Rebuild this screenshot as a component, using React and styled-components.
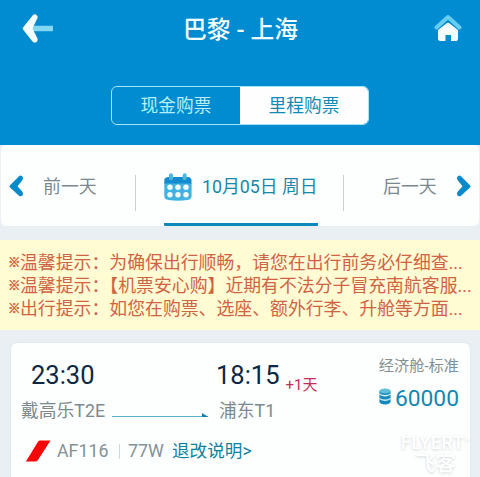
import React from 'react';
import styled, { createGlobalStyle } from 'styled-components';

const Global = createGlobalStyle`
  * { box-sizing: border-box; }
  body {
    margin: 0;
    background: #e9eff2;
    font-family: Roboto, "Noto Sans CJK SC", sans-serif;
    overflow: hidden;
  }
`;

const Screen = styled.main`
  width: 480px;
  height: 477px;
  overflow: hidden;
  background: #e9eff2;
`;

const Header = styled.header`
  height: 145px;
  background: #018bd0;
`;

const TitleBar = styled.div`
  display: grid;
  grid-template-columns: 60px 1fr 60px;
  height: 86px;
  svg { display: block; }
`;

const IconButton = styled.div`
  padding: ${p => p.$pad};
`;

const Title = styled.h1`
  margin: 0;
  padding: 12px 0 0 1px;
  text-align: center;
  white-space: nowrap;
  font-size: 23.8px;
  font-weight: 500;
  line-height: 36px;
  color: #f1fdff;
`;

const Segmented = styled.div`
  display: grid;
  grid-template-columns: 128px 1fr;
  width: 258px;
  height: 39px;
  margin-left: 111px;
  border: 1px solid #a5e6f7;
  border-radius: 6px;
  overflow: hidden;
`;

const Segment = styled.div`
  text-align: center;
  font-size: 17.7px;
  line-height: 38px;
  color: ${p => (p.$active ? '#128bb4' : '#b5effa')};
  background: ${p => (p.$active ? '#fefefe' : 'transparent')};
`;

const DateBar = styled.nav`
  display: grid;
  grid-template-columns: 42px 92px 29px 154px 25px 40px 73px 1fr;
  height: 81px;
  margin: 0 1px;
  background: #fdfefe;
  border-radius: 5px;
  svg { display: block; }
`;

const Day = styled.div`
  font-size: 17.9px;
  line-height: 24px;
  padding-top: 30px;
  color: #7b898e;
  white-space: nowrap;
`;

const Divider = styled.div`
  width: 1px;
  height: 36px;
  margin-top: 30px;
  background: #c5d3d9;
`;

const SelectedDay = styled.div`
  display: flex;
  gap: 10px;
  border-bottom: 3px solid #0c88b9;
  border-radius: 1px;
  white-space: nowrap;
  font-size: 17.8px;
  line-height: 24px;
  color: #1688a7;
  svg { flex: none; margin-top: 28px; }
  span { padding-top: 30px; }
`;

const Chevron = styled.div`
  padding: 29px 0 0 ${p => p.$left}px;
`;

const Notices = styled.section`
  height: 90px;
  margin-top: 14px;
  padding: 11px 0 0 9px;
  background: #fffbd3;
  color: #cf6444;
`;

const Notice = styled.p`
  display: flex;
  margin: 0;
  height: 23px;
  line-height: 23px;
  font-size: 17.88px;
  white-space: nowrap;
`;

const Mark = styled.span`
  width: 11px;
  font-size: 12.5px;
  -webkit-text-stroke: 0.5px #cf6444;
  text-indent: -1px;
`;

const Card = styled.article`
  height: 150px;
  margin: 13px 10px 0 11px;
  padding-top: 1px;
  background: #fdfefe;
  border-radius: 6px;
  box-shadow: 0 0 2px #d5e0e4;
`;

const Journey = styled.div`
  display: grid;
  grid-template-columns: 101px 97px 150px 1fr;
  height: 90px;
`;

const Stop = styled.div`
  padding: 13px 0 0 ${p => p.$left}px;
  white-space: nowrap;
`;

const Time = styled.div`
  display: flex;
  height: 36px;
  font-size: 25.5px;
  line-height: 36px;
  margin-left: ${p => p.$shift}px;
  color: #0c2744;
`;

const NextDay = styled.span`
  padding: 10px 0 0 6px;
  font-size: 15px;
  line-height: 36px;
  color: #c22c5d;
`;

const Airport = styled.div`
  font-size: 17.8px;
  line-height: 24px;
  margin-top: 6px;
  color: #7c898e;
`;

const Route = styled.div`
  padding-top: 67px;
  svg { display: block; }
`;

const Fare = styled.div`
  padding: 10px 11px 0 0;
  text-align: right;
  white-space: nowrap;
  font-size: 15.2px;
  line-height: 24px;
  color: #839094;
`;

const Price = styled.div`
  display: flex;
  justify-content: flex-end;
  gap: 4px;
  font-size: 22.8px;
  line-height: 41px;
  color: #1288b2;
  svg { margin-top: 10px; }
`;

const Flight = styled.div`
  display: flex;
  align-items: center;
  height: 34px;
  padding-left: 14px;
  font-size: 17.8px;
  line-height: 34px;
  color: #849196;
  white-space: nowrap;
`;

const FlightNumber = styled.span`
  width: 62px;
  margin-left: 6px;
`;

const Aircraft = styled.span`
  display: flex;
  align-items: center;
  width: 53px;
  &::before {
    content: "";
    width: 1px;
    height: 15px;
    margin-right: 8px;
    background: #ced8dc;
  }
`;

const Rules = styled.span`
  color: #0e829d;
  font-size: 17.6px;
`;

const Watermark = styled.div`
  position: absolute;
  left: 401px;
  top: 433px;
  width: 79px;
  color: #fff;
  text-shadow: 0 1px 3px #d0d6d8;
  line-height: 20px;
  font-size: 17.5px;
  font-weight: 500;
  letter-spacing: 0.8px;
  white-space: nowrap;
  sup { font-size: 6px; line-height: 0; vertical-align: 7px; }
  div { padding-left: 14px; font-size: 20px; line-height: 22px; }
`;

const BackIcon = () => (
  <svg width="32" height="32" viewBox="0 0 32 32">
    <path d="M9 14.500h22" stroke="#83d7f2" strokeWidth="5.500" />
    <path d="M1.200 13.300 10.800 1.200Q12.700-.8 14.800 1.300 16.500 3 15 5L10.500 14.500 15 23.500Q16.500 26.500 14.500 28 12.300 29.500 10.500 27.500L1.200 15.800Q.3 14.500 1.200 13.300Z" fill="#f3fdff" />
  </svg>
);

const HomeIcon = () => (
  <svg width="28" height="28" viewBox="0 0 28 28">
    <path d="M2.500 13.500 14 3l11.500 10.500" fill="none" stroke="#67cdf2" strokeWidth="4" strokeLinecap="round" strokeLinejoin="round" />
    <path d="M4 16 12.300 9.500Q14 8 15.700 9.500L24 16V25Q24 27 22 27H17V21H11.500V27H6.500Q4 27 4 25Z" fill="#f6fdff" />
  </svg>
);

const CalendarIcon = () => (
  <svg width="28" height="29" viewBox="0 0 28 29">
    <path d="M.3 10H27.600V23Q27.600 26.500 23.500 27 14 28.500 4.500 27 .3 26.500 .3 23Z" fill="#42b3e0" />
    <path d="M.3 10.500V7.500Q.3 4 4.500 4h19q4 0 4 3.500v3z" fill="#138bcf" />
    <path d="M7 2.300v3M20.700 2.300v3" stroke="#4cb8dd" strokeWidth="4" strokeLinecap="round" />
    {[6, 14, 22].map(x => [14.2, 21.700].map(y => <circle key={`${x}-${y}`} cx={x} cy={y} r="2.700" fill="#f4fdff" />))}
  </svg>
);

const ArrowIcon = ({ right }) => (
  <svg width="16" height="24" viewBox="0 0 16 24">
    <g transform={right ? 'translate(16 0) scale(-1 1)' : undefined}>
      <path d="M2 11.300 11 2.200Q12.500 1 14.200 2.300 16 4 14.500 6L9.500 12.300 14.500 18Q16 20 14.200 21.700 12.500 23 11 21.700L2 13.500Q1 12.400 2 11.300Z" fill="#078ac9" />
    </g>
  </svg>
);

const CoinsIcon = () => (
  <svg width="12" height="18" viewBox="0 0 12 18">
    <path d="M.4 3v10.500c0 4 11.200 4 11.200 0V3z" fill="#168bbd" />
    <path d="M.4 5.800c2 2.600 9.200 2.600 11.200 0M.4 10.300c2 2.600 9.200 2.600 11.200 0" fill="none" stroke="#d9f2f8" strokeWidth="1.300" />
    <ellipse cx="6" cy="3" rx="5.600" ry="2.500" fill="#62bfda" />
  </svg>
);

const RouteLine = () => (
  <svg width="97" height="8" viewBox="0 0 97 8">
    <path d="M0 5.500h96" stroke="#55b3c6" strokeWidth="1" />
    <path d="M90 2 96.500 6H90z" fill="#1283a7" />
  </svg>
);

const AirlineLogo = () => (
  <svg width="26" height="24" viewBox="0 0 26 24">
    <path d="M13.300 2.300Q13.800 1.500 15 1.500H25.500L13 21Q12 22.500 10 22.500H.5L1.500 21.500Z" fill="#f50808" />
  </svg>
);

const notices = [
  '温馨提示：为确保出行顺畅，请您在出行前务必仔细查...',
  '温馨提示：【机票安心购】近期有不法分子冒充南航客服...',
  '出行提示：如您在购票、选座、额外行李、升舱等方面...',
];

export default function App() {
  return (
    <Screen>
      <Global />
      <Header>
        <TitleBar>
          <IconButton $pad="14px 0 0 22px"><BackIcon /></IconButton>
          <Title>巴黎 - 上海</Title>
          <IconButton $pad="14px 0 0 14px"><HomeIcon /></IconButton>
        </TitleBar>
        <Segmented>
          <Segment>现金购票</Segment>
          <Segment $active>里程购票</Segment>
        </Segmented>
      </Header>
      <DateBar>
        <Chevron $left={7}><ArrowIcon /></Chevron>
        <Day>前一天</Day>
        <Divider />
        <SelectedDay><CalendarIcon /><span>10月05日 周日</span></SelectedDay>
        <div />
        <Divider />
        <Day>后一天</Day>
        <Chevron $left={0}><ArrowIcon right /></Chevron>
      </DateBar>
      <Notices>
        {notices.map(text => <Notice key={text}><Mark>※</Mark>{text}</Notice>)}
      </Notices>
      <Card>
        <Journey>
          <Stop $left={10}>
            <Time $shift={10}>23:30</Time>
            <Airport>戴高乐T2E</Airport>
          </Stop>
          <Route><RouteLine /></Route>
          <Stop $left={10}>
            <Time $shift={-3}>18:15<NextDay>+1天</NextDay></Time>
            <Airport>浦东T1</Airport>
          </Stop>
          <Fare>
            经济舱-标准
            <Price><CoinsIcon />60000</Price>
          </Fare>
        </Journey>
        <Flight>
          <AirlineLogo />
          <FlightNumber>AF116</FlightNumber>
          <Aircraft>77W</Aircraft>
          <Rules>退改说明&gt;</Rules>
        </Flight>
      </Card>
      <Watermark>FLYERT<sup>®</sup><div>飞客</div></Watermark>
    </Screen>
  );
}
